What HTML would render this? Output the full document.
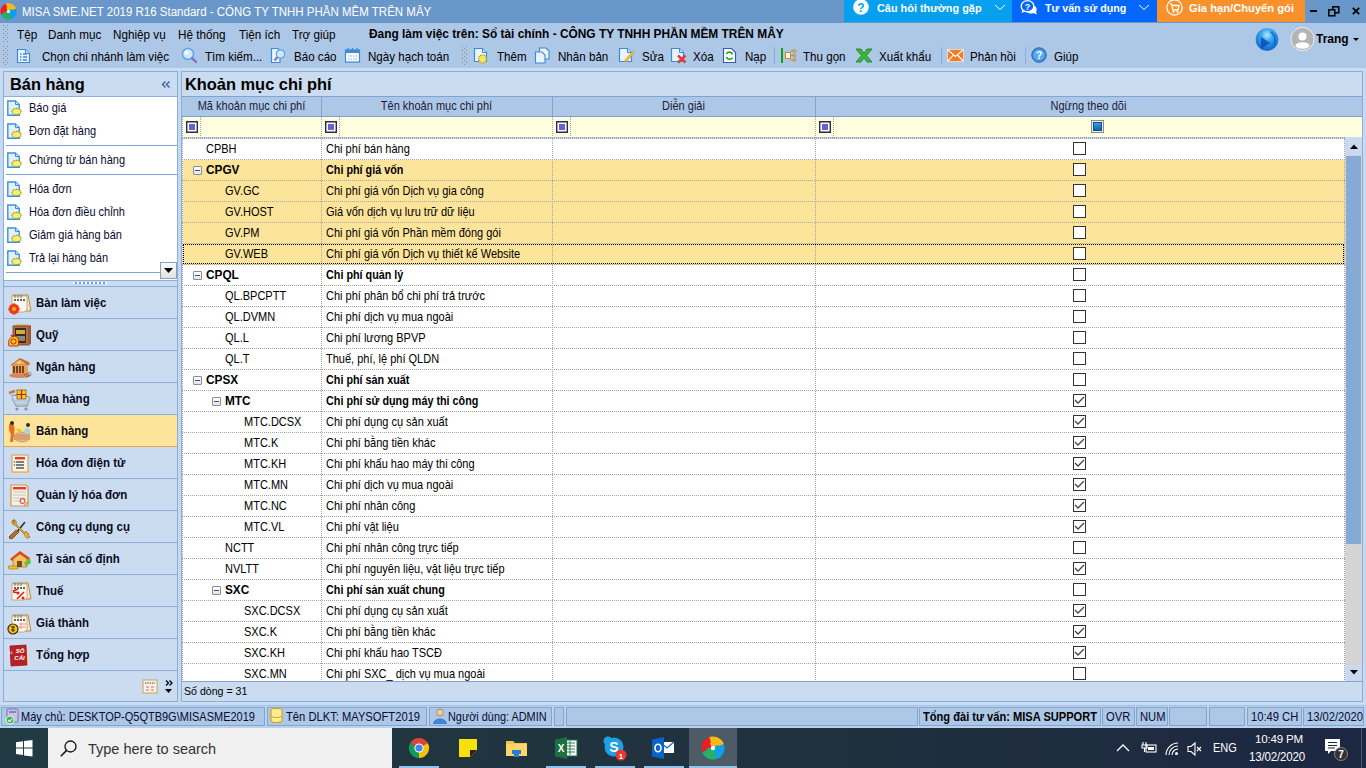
<!DOCTYPE html>
<html><head><meta charset="utf-8"><style>
*{box-sizing:border-box;margin:0;padding:0}
html,body{width:1366px;height:768px;overflow:hidden}
body{position:relative;background:#c6d9f0;font-family:"Liberation Sans",sans-serif;font-size:12px;color:#000}
.a{position:absolute}
.t{position:absolute;white-space:nowrap;line-height:1}
svg{position:absolute;overflow:visible}
</style></head><body>
<div class="a" style="left:0px;top:0px;width:1366px;height:23px;background:#6a97c9;"></div>
<svg style="left:0;top:3px" width="17" height="17" viewBox="0 0 24 24"><clipPath id="lc1"><circle cx="12" cy="12" r="11.5"/></clipPath><g clip-path="url(#lc1)"><g transform="rotate(-20 12 12)"><path d="M12 12 V0 H24 V12 Z" fill="#fdb913"/><path d="M12 12 H24 V24 H12 Z" fill="#0aa0ee"/><path d="M12 12 V24 H0 V12 Z" fill="#25b06a"/><path d="M12 12 H0 V0 H12 Z" fill="#ec1c24"/></g><circle cx="7.2" cy="9.5" r="5.2" fill="#ec1c24"/><circle cx="14.5" cy="7.2" r="5.2" fill="#fdb913"/><circle cx="16.8" cy="14.5" r="5.2" fill="#0aa0ee"/><circle cx="9.5" cy="16.8" r="5.2" fill="#25b06a"/></g><circle cx="12" cy="12" r="2.2" fill="#fff"/></svg>
<div class="t" style="left:22px;top:7px;font-size:11.5px;color:#fff;transform:scaleY(1.08);transform-origin:0 9.5px">MISA SME.NET 2019 R16 Standard - CÔNG TY TNHH PHẦN MỀM TRÊN MÂY</div>
<div class="a" style="left:844px;top:0px;width:168px;height:22px;background:#06a0ee;"></div>
<div class="a" style="left:1012px;top:0px;width:145px;height:22px;background:#0467fc;"></div>
<div class="a" style="left:1157px;top:0px;width:148px;height:22px;background:#f8912b;"></div>
<svg style="left:853px;top:-1px" width="16" height="16"><circle cx="8" cy="8" r="7.8" fill="#fff"/><text x="8" y="12.5" font-family="Liberation Sans" font-weight="bold" font-size="12" text-anchor="middle" fill="#06a0ee">?</text></svg>
<div class="t" style="left:877px;top:3px;font-size:10.9px;font-weight:bold;color:#fff;">Câu hỏi thường gặp</div>
<svg style="left:994px;top:4px" width="12" height="7"><path d="M1 1 L6 5.5 L11 1" stroke="#fff" stroke-width="1" fill="none"/></svg>
<svg style="left:1020px;top:0px" width="18" height="15"><path d="M11 5 C16 5 18 9 16 12 L17 14.5 L13.5 13 C11 14 8 13.5 7 12 Z" fill="#fff"/><ellipse cx="7.5" cy="6.3" rx="6.3" ry="5.6" fill="#0467fc" stroke="#fff" stroke-width="1.3"/><path d="M2.5 10 L1.5 13 L5 11.5" fill="#fff"/><text x="7.5" y="9.6" font-family="Liberation Sans" font-weight="bold" font-size="9" text-anchor="middle" fill="#fff">?</text></svg>
<div class="t" style="left:1045px;top:3px;font-size:10.7px;font-weight:bold;color:#fff;">Tư vấn sử dụng</div>
<svg style="left:1138px;top:4px" width="12" height="7"><path d="M1 1 L6 5.5 L11 1" stroke="#fff" stroke-width="1" fill="none"/></svg>
<svg style="left:1166px;top:-1px" width="17" height="17"><circle cx="8.5" cy="8.5" r="7.7" stroke="#fff" stroke-width="1.2" fill="none"/><path d="M4 5 L5.5 5 L7 11 L12 11 L13 6.5 L6 6.5" stroke="#fff" stroke-width="1.3" fill="none"/><circle cx="7.5" cy="13" r="1" fill="#fff"/><circle cx="11.5" cy="13" r="1" fill="#fff"/></svg>
<div class="t" style="left:1189px;top:3px;font-size:11.2px;font-weight:bold;color:#fff;">Gia hạn/Chuyển gói</div>
<div class="a" style="left:1310px;top:10px;width:7px;height:2px;background:#000;"></div>
<svg style="left:1327px;top:5px" width="14" height="12"><rect x="5.8" y="1.8" width="6" height="6" fill="none" stroke="#000" stroke-width="1.5"/><rect x="1.8" y="4.8" width="6" height="6" fill="#6a97c9" stroke="#000" stroke-width="1.5"/></svg>
<svg style="left:1352px;top:7px" width="8" height="8"><path d="M0.8 0.8 L7.2 7.2 M7.2 0.8 L0.8 7.2" stroke="#000" stroke-width="1.8"/></svg>
<div class="a" style="left:0px;top:23px;width:1366px;height:45px;background:#adc7e6;"></div>
<div class="a" style="left:0px;top:68px;width:1366px;height:3px;background:#c9dbf0;"></div>
<svg style="left:0;top:0" width="1366" height="70" fill="#8c8a88"><rect x="3" y="25" width="1" height="1"/><rect x="7" y="25" width="1" height="1"/><rect x="5" y="27" width="1" height="1"/><rect x="3" y="29" width="1" height="1"/><rect x="7" y="29" width="1" height="1"/><rect x="5" y="31" width="1" height="1"/><rect x="3" y="33" width="1" height="1"/><rect x="7" y="33" width="1" height="1"/><rect x="5" y="35" width="1" height="1"/><rect x="3" y="37" width="1" height="1"/><rect x="7" y="37" width="1" height="1"/><rect x="5" y="39" width="1" height="1"/><rect x="3" y="41" width="1" height="1"/><rect x="7" y="41" width="1" height="1"/></svg>
<svg style="left:0;top:0" width="1366" height="70" fill="#8c8a88"><rect x="3" y="46" width="1" height="1"/><rect x="7" y="46" width="1" height="1"/><rect x="5" y="48" width="1" height="1"/><rect x="3" y="50" width="1" height="1"/><rect x="7" y="50" width="1" height="1"/><rect x="5" y="52" width="1" height="1"/><rect x="3" y="54" width="1" height="1"/><rect x="7" y="54" width="1" height="1"/><rect x="5" y="56" width="1" height="1"/><rect x="3" y="58" width="1" height="1"/><rect x="7" y="58" width="1" height="1"/><rect x="5" y="60" width="1" height="1"/><rect x="3" y="62" width="1" height="1"/><rect x="7" y="62" width="1" height="1"/><rect x="5" y="64" width="1" height="1"/></svg>
<div class="t" style="left:17px;top:29px;font-size:11.7px;color:#000;transform:scaleY(1.06);transform-origin:0 10px">Tệp</div>
<div class="t" style="left:48px;top:29px;font-size:11.7px;color:#000;transform:scaleY(1.06);transform-origin:0 10px">Danh mục</div>
<div class="t" style="left:113px;top:29px;font-size:11.7px;color:#000;transform:scaleY(1.06);transform-origin:0 10px">Nghiệp vụ</div>
<div class="t" style="left:178px;top:29px;font-size:11.7px;color:#000;transform:scaleY(1.06);transform-origin:0 10px">Hệ thống</div>
<div class="t" style="left:239px;top:29px;font-size:11.7px;color:#000;transform:scaleY(1.06);transform-origin:0 10px">Tiện ích</div>
<div class="t" style="left:292px;top:29px;font-size:11.7px;color:#000;transform:scaleY(1.06);transform-origin:0 10px">Trợ giúp</div>
<div class="t" style="left:369px;top:29px;font-size:11.9px;font-weight:bold;color:#000;transform:scaleY(1.06);transform-origin:0 10px">Đang làm việc trên: Sổ tài chính - CÔNG TY TNHH PHẦN MỀM TRÊN MÂY</div>
<svg style="left:16px;top:48px" width="16" height="16"><path d="M1.5 1.5 H9.5 L13.5 5.5 V14.5 H1.5 Z" fill="#eaf3fc" stroke="#3d8ad8" stroke-width="1.2"/><path d="M9.5 1.5 V5.5 H13.5" fill="#c8def4" stroke="#3d8ad8" stroke-width="1"/><path d="M4 6 H5.5 M4 9 H5.5 M4 12 H5.5 M7 6 H11 M7 9 H11 M7 12 H11" stroke="#3d8ad8" stroke-width="1.3"/></svg>
<svg style="left:181px;top:47px" width="17" height="17"><circle cx="7" cy="7" r="5.5" fill="#cfe8fb" stroke="#5aa8e0" stroke-width="1.5"/><circle cx="5.5" cy="5.5" r="2" fill="#fff"/><path d="M11 11 L15 15" stroke="#8a6ad0" stroke-width="2.4" stroke-linecap="round"/></svg>
<svg style="left:270px;top:47px" width="17" height="17"><path d="M1.5 1.5 H8 L10 3.5 V15.5 H1.5 Z" fill="#eaf3fc" stroke="#3d8ad8" stroke-width="1.2"/><circle cx="10.5" cy="7" r="4.2" fill="#cfe8fb" stroke="#5aa8e0" stroke-width="1.2"/><path d="M7.5 10 L4.5 13.5" stroke="#8a6ad0" stroke-width="2"/></svg>
<svg style="left:344px;top:47px" width="17" height="17"><rect x="1.5" y="3" width="14" height="12" fill="#fff" stroke="#3d8ad8" stroke-width="1.2"/><rect x="1.5" y="3" width="14" height="3" fill="#3d8ad8"/><path d="M4 1 V4 M8.5 1 V4 M13 1 V4" stroke="#3d8ad8" stroke-width="1.2"/><path d="M4 9 H14 M4 12 H14" stroke="#7ab0e8" stroke-width="1.2" stroke-dasharray="1.5 1"/></svg>
<svg style="left:0;top:0" width="1366" height="70" fill="#8c8a88"><rect x="462" y="46" width="1" height="1"/><rect x="466" y="46" width="1" height="1"/><rect x="464" y="48" width="1" height="1"/><rect x="462" y="50" width="1" height="1"/><rect x="466" y="50" width="1" height="1"/><rect x="464" y="52" width="1" height="1"/><rect x="462" y="54" width="1" height="1"/><rect x="466" y="54" width="1" height="1"/><rect x="464" y="56" width="1" height="1"/><rect x="462" y="58" width="1" height="1"/><rect x="466" y="58" width="1" height="1"/><rect x="464" y="60" width="1" height="1"/><rect x="462" y="62" width="1" height="1"/><rect x="466" y="62" width="1" height="1"/><rect x="464" y="64" width="1" height="1"/></svg>
<svg style="left:473px;top:47px" width="18" height="17"><path d="M1.5 1.5 H9.5 L13.5 5.5 V14.5 H1.5 Z" fill="#eaf3fc" stroke="#3d8ad8" stroke-width="1.2"/><path d="M9.5 1.5 V5.5 H13.5" fill="#c8def4" stroke="#3d8ad8" stroke-width="1"/><circle cx="9.5" cy="12" r="4" fill="#f2e860" stroke="#a89a18" stroke-width="1.2" stroke-dasharray="1.2 0.8"/></svg>
<svg style="left:534px;top:47px" width="17" height="17"><path d="M5.5 1 H12 L15 4 V12 H5.5 Z" fill="#eaf3fc" stroke="#3d8ad8" stroke-width="1.1"/><path d="M1.5 5 H8 L11 8 V16 H1.5 Z" fill="#eaf3fc" stroke="#3d8ad8" stroke-width="1.1"/></svg>
<svg style="left:618px;top:47px" width="17" height="17"><path d="M1.5 1.5 H9.5 L13.5 5.5 V14.5 H1.5 Z" fill="#eaf3fc" stroke="#3d8ad8" stroke-width="1.2"/><path d="M9.5 1.5 V5.5 H13.5" fill="#c8def4" stroke="#3d8ad8" stroke-width="1"/><path d="M7 13 L14.5 4.5 L16 6 L8.5 14.5 L6.5 15 Z" fill="#f4c640" stroke="#c89a20" stroke-width="0.8"/></svg>
<svg style="left:670px;top:47px" width="18" height="17"><path d="M1.5 1.5 H9.5 L13.5 5.5 V14.5 H1.5 Z" fill="#eaf3fc" stroke="#3d8ad8" stroke-width="1.2"/><path d="M9.5 1.5 V5.5 H13.5" fill="#c8def4" stroke="#3d8ad8" stroke-width="1"/><path d="M8 8.5 L15.5 15.5 M15.5 8.5 L8 15.5" stroke="#e03a3a" stroke-width="2.4"/></svg>
<svg style="left:722px;top:47px" width="16" height="17"><path d="M1.5 1.5 H9.5 L13.5 5.5 V15.5 H1.5 Z" fill="#fff" stroke="#3d5ab8" stroke-width="1.2"/><path d="M4.5 7 A3.2 3.2 0 0 1 10.5 7.5 M10.5 10.5 A3.2 3.2 0 0 1 4.5 10" stroke="#28a028" stroke-width="1.8" fill="none"/></svg>
<div class="a" style="left:774px;top:47px;width:1px;height:17px;background:#8aacd8;"></div>
<svg style="left:780px;top:47px" width="17" height="17"><path d="M2 1 V16" stroke="#1a9a1a" stroke-width="2"/><rect x="5.5" y="5.5" width="5" height="6" fill="#fff4d8" stroke="#c88a30" stroke-width="1"/><path d="M10.5 4 H14 M10.5 8.5 H14 M10.5 13 H14" stroke="#c88a30" stroke-width="1"/><circle cx="14.5" cy="4" r="1.4" fill="none" stroke="#c88a30"/><circle cx="14.5" cy="8.5" r="1.4" fill="none" stroke="#c88a30"/><circle cx="14.5" cy="13" r="1.4" fill="none" stroke="#c88a30"/></svg>
<svg style="left:855px;top:48px" width="18" height="15"><path d="M1 1 H6 L9 5.5 L12 1 H17 L11.5 7.5 L17 14 H12 L9 9.5 L6 14 H1 L6.5 7.5 Z" fill="#3cb83c" stroke="#1a7a1a" stroke-width="0.8"/></svg>
<div class="a" style="left:941px;top:47px;width:1px;height:17px;background:#8aacd8;"></div>
<svg style="left:947px;top:49px" width="17" height="13"><rect x="0.5" y="0.5" width="16" height="12" fill="#f47a20" stroke="#fff" stroke-width="0.6"/><path d="M1 1 L8.5 7.5 L16 1 M1 12 L6.5 6 M16 12 L10.5 6" stroke="#fff" stroke-width="1.2" fill="none"/></svg>
<div class="a" style="left:1025px;top:47px;width:1px;height:17px;background:#8aacd8;"></div>
<svg style="left:1031px;top:47px" width="16" height="16"><circle cx="8" cy="8" r="7.3" fill="#3a88d8" stroke="#1a5aa8" stroke-width="0.8"/><circle cx="8" cy="8" r="5.8" fill="#5aa8f0"/><text x="8" y="12" font-family="Liberation Sans" font-weight="bold" font-size="11" text-anchor="middle" fill="#fff">?</text></svg>
<svg style="left:1255px;top:28px" width="24" height="24"><defs><radialGradient id="gg" cx="0.5" cy="0.3" r="0.75"><stop offset="0" stop-color="#b8e8ff"/><stop offset="0.35" stop-color="#38a8f0"/><stop offset="1" stop-color="#0a5ac0"/></radialGradient></defs><circle cx="12" cy="11.5" r="11.3" fill="url(#gg)"/><path d="M6 9 L15 15 L6 21 Z" fill="#0a4cb8" opacity="0.85"/><path d="M16 4 C20 7 21 12 19 17" stroke="#0a58c0" stroke-width="2" fill="none" opacity="0.7"/></svg>
<svg style="left:1290px;top:27px" width="25" height="25"><circle cx="12.5" cy="12" r="11.6" fill="#b4b4b4" stroke="#f0f0f0" stroke-width="1"/><circle cx="12.5" cy="9.6" r="4" fill="#fff"/><ellipse cx="12.5" cy="18.5" rx="7" ry="3.3" fill="#fff"/></svg>
<div class="t" style="left:1316px;top:33px;font-size:12px;font-weight:bold;color:#000;transform:scaleY(1.1);transform-origin:0 10px">Trang</div>
<svg style="left:1353px;top:38px" width="6" height="4"><path d="M0 0 H6 L3 3 Z" fill="#000"/></svg>
<div class="t" style="left:42px;top:51px;font-size:11.6px;color:#000;transform:scaleY(1.06);transform-origin:0 10px">Chọn chi nhánh làm việc</div>
<div class="t" style="left:205px;top:51px;font-size:11.6px;color:#000;transform:scaleY(1.06);transform-origin:0 10px">Tìm kiếm...</div>
<div class="t" style="left:294px;top:51px;font-size:11.6px;color:#000;transform:scaleY(1.06);transform-origin:0 10px">Báo cáo</div>
<div class="t" style="left:368px;top:51px;font-size:11.6px;color:#000;transform:scaleY(1.06);transform-origin:0 10px">Ngày hạch toán</div>
<div class="t" style="left:497px;top:51px;font-size:11.6px;color:#000;transform:scaleY(1.06);transform-origin:0 10px">Thêm</div>
<div class="t" style="left:558px;top:51px;font-size:11.6px;color:#000;transform:scaleY(1.06);transform-origin:0 10px">Nhân bản</div>
<div class="t" style="left:642px;top:51px;font-size:11.6px;color:#000;transform:scaleY(1.06);transform-origin:0 10px">Sửa</div>
<div class="t" style="left:693px;top:51px;font-size:11.6px;color:#000;transform:scaleY(1.06);transform-origin:0 10px">Xóa</div>
<div class="t" style="left:745px;top:51px;font-size:11.6px;color:#000;transform:scaleY(1.06);transform-origin:0 10px">Nạp</div>
<div class="t" style="left:803px;top:51px;font-size:11.6px;color:#000;transform:scaleY(1.06);transform-origin:0 10px">Thu gọn</div>
<div class="t" style="left:879px;top:51px;font-size:11.6px;color:#000;transform:scaleY(1.06);transform-origin:0 10px">Xuất khẩu</div>
<div class="t" style="left:970px;top:51px;font-size:11.6px;color:#000;transform:scaleY(1.06);transform-origin:0 10px">Phản hồi</div>
<div class="t" style="left:1054px;top:51px;font-size:11.6px;color:#000;transform:scaleY(1.06);transform-origin:0 10px">Giúp</div>
<div class="a" style="left:3px;top:71px;width:175px;height:631px;border:1px solid #8aafdb;background:#cbdcf0"></div>
<div class="t" style="left:10px;top:76px;font-size:16.4px;font-weight:bold;color:#000;">Bán hàng</div>
<svg style="left:160px;top:79px" width="12" height="11"><path d="M5.5 2.5 L2.5 5.5 L5.5 8.5 M9.5 2.5 L6.5 5.5 L9.5 8.5" stroke="#3d68a8" stroke-width="1.5" fill="none"/></svg>
<div class="a" style="left:4px;top:96px;width:173px;height:1px;background:#8aafdb;"></div>
<div class="a" style="left:4px;top:97px;width:173px;height:183px;background:#fff;"></div>
<svg style="left:7px;top:100px" width="18" height="17"><path d="M0.8 1 H8.5 L12.2 4.5 V15.2 H0.8 Z" fill="#e4f0fc" stroke="#3a90e0" stroke-width="1.4"/><path d="M8.5 1 V4.5 H12.2" fill="#c0dcf6" stroke="#3a90e0" stroke-width="1"/><polygon points="15.50,11.50 13.56,12.25 14.70,13.60 12.47,13.55 12.50,15.14 10.59,14.30 9.50,15.70 8.41,14.30 6.50,15.14 6.53,13.55 4.30,13.60 5.44,12.25 3.50,11.50 5.44,10.75 4.30,9.40 6.53,9.45 6.50,7.86 8.41,8.70 9.50,7.30 10.59,8.70 12.50,7.86 12.47,9.45 14.70,9.40 13.56,10.75 " fill="#a8a020"/><ellipse cx="9.5" cy="11.5" rx="4" ry="2.6" fill="#f4f070"/></svg>
<div class="t" style="left:29px;top:103px;font-size:11px;color:#0a0a30;transform:scaleY(1.1);transform-origin:0 9.3px">Báo giá</div>
<svg style="left:7px;top:123px" width="18" height="17"><path d="M0.8 1 H8.5 L12.2 4.5 V15.2 H0.8 Z" fill="#e4f0fc" stroke="#3a90e0" stroke-width="1.4"/><path d="M8.5 1 V4.5 H12.2" fill="#c0dcf6" stroke="#3a90e0" stroke-width="1"/><polygon points="15.50,11.50 13.56,12.25 14.70,13.60 12.47,13.55 12.50,15.14 10.59,14.30 9.50,15.70 8.41,14.30 6.50,15.14 6.53,13.55 4.30,13.60 5.44,12.25 3.50,11.50 5.44,10.75 4.30,9.40 6.53,9.45 6.50,7.86 8.41,8.70 9.50,7.30 10.59,8.70 12.50,7.86 12.47,9.45 14.70,9.40 13.56,10.75 " fill="#a8a020"/><ellipse cx="9.5" cy="11.5" rx="4" ry="2.6" fill="#f4f070"/></svg>
<div class="t" style="left:29px;top:126px;font-size:11px;color:#0a0a30;transform:scaleY(1.1);transform-origin:0 9.3px">Đơn đặt hàng</div>
<svg style="left:7px;top:152px" width="18" height="17"><path d="M0.8 1 H8.5 L12.2 4.5 V15.2 H0.8 Z" fill="#e4f0fc" stroke="#3a90e0" stroke-width="1.4"/><path d="M8.5 1 V4.5 H12.2" fill="#c0dcf6" stroke="#3a90e0" stroke-width="1"/><polygon points="15.50,11.50 13.56,12.25 14.70,13.60 12.47,13.55 12.50,15.14 10.59,14.30 9.50,15.70 8.41,14.30 6.50,15.14 6.53,13.55 4.30,13.60 5.44,12.25 3.50,11.50 5.44,10.75 4.30,9.40 6.53,9.45 6.50,7.86 8.41,8.70 9.50,7.30 10.59,8.70 12.50,7.86 12.47,9.45 14.70,9.40 13.56,10.75 " fill="#a8a020"/><ellipse cx="9.5" cy="11.5" rx="4" ry="2.6" fill="#f4f070"/></svg>
<div class="t" style="left:29px;top:155px;font-size:11px;color:#0a0a30;transform:scaleY(1.1);transform-origin:0 9.3px">Chứng từ bán hàng</div>
<svg style="left:7px;top:181px" width="18" height="17"><path d="M0.8 1 H8.5 L12.2 4.5 V15.2 H0.8 Z" fill="#e4f0fc" stroke="#3a90e0" stroke-width="1.4"/><path d="M8.5 1 V4.5 H12.2" fill="#c0dcf6" stroke="#3a90e0" stroke-width="1"/><polygon points="15.50,11.50 13.56,12.25 14.70,13.60 12.47,13.55 12.50,15.14 10.59,14.30 9.50,15.70 8.41,14.30 6.50,15.14 6.53,13.55 4.30,13.60 5.44,12.25 3.50,11.50 5.44,10.75 4.30,9.40 6.53,9.45 6.50,7.86 8.41,8.70 9.50,7.30 10.59,8.70 12.50,7.86 12.47,9.45 14.70,9.40 13.56,10.75 " fill="#a8a020"/><ellipse cx="9.5" cy="11.5" rx="4" ry="2.6" fill="#f4f070"/></svg>
<div class="t" style="left:29px;top:184px;font-size:11px;color:#0a0a30;transform:scaleY(1.1);transform-origin:0 9.3px">Hóa đơn</div>
<svg style="left:7px;top:204px" width="18" height="17"><path d="M0.8 1 H8.5 L12.2 4.5 V15.2 H0.8 Z" fill="#e4f0fc" stroke="#3a90e0" stroke-width="1.4"/><path d="M8.5 1 V4.5 H12.2" fill="#c0dcf6" stroke="#3a90e0" stroke-width="1"/><polygon points="15.50,11.50 13.56,12.25 14.70,13.60 12.47,13.55 12.50,15.14 10.59,14.30 9.50,15.70 8.41,14.30 6.50,15.14 6.53,13.55 4.30,13.60 5.44,12.25 3.50,11.50 5.44,10.75 4.30,9.40 6.53,9.45 6.50,7.86 8.41,8.70 9.50,7.30 10.59,8.70 12.50,7.86 12.47,9.45 14.70,9.40 13.56,10.75 " fill="#a8a020"/><ellipse cx="9.5" cy="11.5" rx="4" ry="2.6" fill="#f4f070"/></svg>
<div class="t" style="left:29px;top:207px;font-size:11px;color:#0a0a30;transform:scaleY(1.1);transform-origin:0 9.3px">Hóa đơn điều chỉnh</div>
<svg style="left:7px;top:227px" width="18" height="17"><path d="M0.8 1 H8.5 L12.2 4.5 V15.2 H0.8 Z" fill="#e4f0fc" stroke="#3a90e0" stroke-width="1.4"/><path d="M8.5 1 V4.5 H12.2" fill="#c0dcf6" stroke="#3a90e0" stroke-width="1"/><polygon points="15.50,11.50 13.56,12.25 14.70,13.60 12.47,13.55 12.50,15.14 10.59,14.30 9.50,15.70 8.41,14.30 6.50,15.14 6.53,13.55 4.30,13.60 5.44,12.25 3.50,11.50 5.44,10.75 4.30,9.40 6.53,9.45 6.50,7.86 8.41,8.70 9.50,7.30 10.59,8.70 12.50,7.86 12.47,9.45 14.70,9.40 13.56,10.75 " fill="#a8a020"/><ellipse cx="9.5" cy="11.5" rx="4" ry="2.6" fill="#f4f070"/></svg>
<div class="t" style="left:29px;top:230px;font-size:11px;color:#0a0a30;transform:scaleY(1.1);transform-origin:0 9.3px">Giảm giá hàng bán</div>
<svg style="left:7px;top:250px" width="18" height="17"><path d="M0.8 1 H8.5 L12.2 4.5 V15.2 H0.8 Z" fill="#e4f0fc" stroke="#3a90e0" stroke-width="1.4"/><path d="M8.5 1 V4.5 H12.2" fill="#c0dcf6" stroke="#3a90e0" stroke-width="1"/><polygon points="15.50,11.50 13.56,12.25 14.70,13.60 12.47,13.55 12.50,15.14 10.59,14.30 9.50,15.70 8.41,14.30 6.50,15.14 6.53,13.55 4.30,13.60 5.44,12.25 3.50,11.50 5.44,10.75 4.30,9.40 6.53,9.45 6.50,7.86 8.41,8.70 9.50,7.30 10.59,8.70 12.50,7.86 12.47,9.45 14.70,9.40 13.56,10.75 " fill="#a8a020"/><ellipse cx="9.5" cy="11.5" rx="4" ry="2.6" fill="#f4f070"/></svg>
<div class="t" style="left:29px;top:253px;font-size:11px;color:#0a0a30;transform:scaleY(1.1);transform-origin:0 9.3px">Trả lại hàng bán</div>
<div class="a" style="left:6px;top:145px;width:171px;height:1px;background:#7fa4d2;"></div>
<div class="a" style="left:6px;top:174px;width:171px;height:1px;background:#7fa4d2;"></div>
<div class="a" style="left:6px;top:272px;width:171px;height:1px;background:#7fa4d2;"></div>
<div class="a" style="left:160px;top:262px;width:17px;height:17px;border:1px solid #8a9fb8;background:linear-gradient(#fafafa,#e2e2e2)"></div>
<svg style="left:164px;top:268px" width="9" height="5"><path d="M0 0 L9 0 L4.5 5 Z" fill="#000"/></svg>
<div class="a" style="left:4px;top:280px;width:173px;height:1px;background:#8aafdb;"></div>
<div class="a" style="left:73px;top:282px;width:34px;height:2px;background-image:linear-gradient(to right,#fff 50%,#7a98c0 50%);background-size:4px 2px"></div>
<div class="a" style="left:4px;top:286px;width:173px;height:1px;background:#8aafdb;"></div>
<svg style="left:142px;top:679px" width="16" height="15"><rect x="1" y="1" width="14" height="13" fill="#fbf4e4" stroke="#c8a060" stroke-width="1"/><path d="M3 4 H13" stroke="#444" stroke-width="1" stroke-dasharray="1.5 0.8"/><path d="M4 8 H7 M9 8 H12 M4 11 H7 M9 11 H12" stroke="#e06080" stroke-width="1"/></svg>
<svg style="left:165px;top:680px" width="8" height="6"><path d="M1 0.5 L3.5 3 L1 5.5 M4.5 0.5 L7 3 L4.5 5.5" stroke="#000" stroke-width="1.3" fill="none"/></svg>
<svg style="left:165px;top:689px" width="7" height="4"><path d="M0 0 H7 L3.5 4 Z" fill="#000"/></svg>
<div class="a" style="left:4px;top:318px;width:173px;height:1px;background:#8aafdb;"></div>
<div class="t" style="left:36px;top:298px;font-size:11.5px;font-weight:bold;color:#0a0a20;transform:scaleY(1.07);transform-origin:0 10px">Bàn làm việc</div>
<svg style="left:7px;top:292px" width="26" height="24" viewBox="0 0 26 24"><path d="M6 3 H21 L24 19 H7 Z" fill="#f4e6c8" stroke="#b88a48" stroke-width="1"/><path d="M5 4 H20 V18 L17 20 H5 Z" fill="#fbf8f0" stroke="#c89a58" stroke-width="0.8"/><path d="M8 3 V6 M11 3 V6 M14 3 V6" stroke="#555" stroke-width="0.8"/><path d="M7 8 H18" stroke="#333" stroke-width="1.4" stroke-dasharray="2 1"/><g fill="#ee3a1a"><circle cx="7" cy="13.5" r="2.2"/><circle cx="7" cy="20.5" r="2.2"/><circle cx="3.5" cy="17" r="2.2"/><circle cx="10.5" cy="17" r="2.2"/><circle cx="4.5" cy="14.5" r="2"/><circle cx="9.5" cy="14.5" r="2"/><circle cx="4.5" cy="19.5" r="2"/><circle cx="9.5" cy="19.5" r="2"/></g><circle cx="7" cy="17" r="2" fill="#f8b020"/></svg>
<div class="a" style="left:4px;top:350px;width:173px;height:1px;background:#8aafdb;"></div>
<div class="t" style="left:36px;top:330px;font-size:11.5px;font-weight:bold;color:#0a0a20;transform:scaleY(1.07);transform-origin:0 10px">Quỹ</div>
<svg style="left:7px;top:324px" width="26" height="24" viewBox="0 0 26 24"><path d="M7 2 L9 0.5 H22 L20 2 Z" fill="#d89a70"/><rect x="6" y="2" width="16" height="19" fill="#b86a40" stroke="#7a4020" stroke-width="0.8"/><rect x="8" y="4" width="11" height="15" fill="#3a2a20"/><rect x="9" y="6" width="9" height="4" fill="#c8b040"/><rect x="9" y="12" width="9" height="5" fill="#8a8a70"/><path d="M21 2 L24 1 V20 L21 21 Z" fill="#9a5a38"/><path d="M2 22 C0 15 5 12 7 12 C10 12 13 15 11 22 Z" fill="#f4c420" stroke="#c82010" stroke-width="0.9"/><path d="M4 11 L6 12.5 L8 11" stroke="#c82010" stroke-width="1.2" fill="none"/><circle cx="6.5" cy="17.5" r="2.6" fill="none" stroke="#c82010" stroke-width="1"/></svg>
<div class="a" style="left:4px;top:382px;width:173px;height:1px;background:#8aafdb;"></div>
<div class="t" style="left:36px;top:362px;font-size:11.5px;font-weight:bold;color:#0a0a20;transform:scaleY(1.07);transform-origin:0 10px">Ngân hàng</div>
<svg style="left:7px;top:356px" width="26" height="24" viewBox="0 0 26 24"><path d="M4 9 L13 2 L22 6 L23 9 Z" fill="#c87038"/><path d="M4 9 L13 3 L21 9 Z" fill="#f0b060" stroke="#a86028" stroke-width="0.7"/><rect x="5" y="9" width="16" height="9" fill="#e8a060"/><path d="M7 10 V17 M10 10 V17 M13 10 V17 M16 10 V17" stroke="#5a2a10" stroke-width="1.6"/><ellipse cx="13" cy="19.5" rx="11" ry="2.5" fill="#d88858"/><path d="M17 19 L24 16 M19 21 L25 18" stroke="#555" stroke-width="1.2" stroke-dasharray="1 1"/><circle cx="12" cy="6.5" r="1.3" fill="#f8e060"/></svg>
<div class="a" style="left:4px;top:414px;width:173px;height:1px;background:#8aafdb;"></div>
<div class="t" style="left:36px;top:394px;font-size:11.5px;font-weight:bold;color:#0a0a20;transform:scaleY(1.07);transform-origin:0 10px">Mua hàng</div>
<svg style="left:7px;top:388px" width="26" height="24" viewBox="0 0 26 24"><path d="M2 5 L8 3" stroke="#c87850" stroke-width="2.5"/><path d="M4 8 C10 6 20 7 23 10 L20 18 H9 L5 10" fill="none" stroke="#9aa4b0" stroke-width="1.4"/><path d="M8 13 H21 M9 16 H20" stroke="#aab4c0" stroke-width="1.2"/><rect x="10" y="2" width="9" height="9" fill="#f8c820" stroke="#8a6010" stroke-width="0.8"/><path d="M14.5 2 V11 M10 6.5 H19" stroke="#b82020" stroke-width="1.2"/><circle cx="10" cy="21" r="1.6" fill="#8a949e"/><circle cx="19" cy="21" r="1.6" fill="#8a949e"/></svg>
<div class="a" style="left:4px;top:415px;width:173px;height:31px;background:#fde49b;"></div>
<div class="a" style="left:4px;top:446px;width:173px;height:1px;background:#f4a04a;"></div>
<div class="t" style="left:36px;top:426px;font-size:11.5px;font-weight:bold;color:#0a0a20;transform:scaleY(1.07);transform-origin:0 10px">Bán hàng</div>
<svg style="left:7px;top:420px" width="26" height="24" viewBox="0 0 26 24"><ellipse cx="15" cy="17" rx="8" ry="5" fill="#e8b880" stroke="#b08050" stroke-width="0.6"/><path d="M7 14 H23 V20 H7 Z" fill="#d8a070"/><path d="M3 3 C1 6 2 12 4 14 L3 22 H6 L7 14 C8 10 8 5 5 3 Z" fill="#e8701a"/><circle cx="5" cy="3" r="2" fill="#3a2a1a"/><path d="M19 8 C17 9 17 13 18 14 H23 C23 11 23 9 21 8 Z" fill="#a8d0e8"/><circle cx="21" cy="5" r="2" fill="#3a2a1a"/><path d="M9 8 L15 10 L12 14 Z" fill="#f0c020"/></svg>
<div class="a" style="left:4px;top:478px;width:173px;height:1px;background:#8aafdb;"></div>
<div class="t" style="left:36px;top:458px;font-size:11.5px;font-weight:bold;color:#0a0a20;transform:scaleY(1.07);transform-origin:0 10px">Hóa đơn điện tử</div>
<svg style="left:7px;top:452px" width="26" height="24" viewBox="0 0 26 24"><path d="M3 20 H23 L22 22 H4 Z" fill="#f4d8b0"/><rect x="5" y="3" width="16" height="17" fill="#fbf4e4" stroke="#c89a58" stroke-width="1"/><rect x="8" y="5" width="10" height="2.4" fill="#e83a2a"/><path d="M9 10 H17 M9 13 H17 M9 16 H17" stroke="#555" stroke-width="1.4"/><circle cx="7.5" cy="10" r="0.9" fill="#888"/><circle cx="7.5" cy="13" r="0.9" fill="#888"/></svg>
<div class="a" style="left:4px;top:510px;width:173px;height:1px;background:#8aafdb;"></div>
<div class="t" style="left:36px;top:490px;font-size:11.5px;font-weight:bold;color:#0a0a20;transform:scaleY(1.07);transform-origin:0 10px">Quản lý hóa đơn</div>
<svg style="left:7px;top:484px" width="26" height="24" viewBox="0 0 26 24"><path d="M4 1 H19 L21 3 V22 H4 Z" fill="#f8f2e4" stroke="#c89850" stroke-width="1.2"/><path d="M17 22 L21 18" stroke="#c89850" stroke-width="1.2"/><rect x="6" y="3" width="13" height="2.4" fill="#e83a2a"/><path d="M6 8 H19 M6 11 H19 M6 14 H19 M6 17 H14" stroke="#b8b8b8" stroke-width="0.8"/><circle cx="15.5" cy="17" r="2.4" fill="none" stroke="#e05050" stroke-width="1.1"/></svg>
<div class="a" style="left:4px;top:542px;width:173px;height:1px;background:#8aafdb;"></div>
<div class="t" style="left:36px;top:522px;font-size:11.5px;font-weight:bold;color:#0a0a20;transform:scaleY(1.07);transform-origin:0 10px">Công cụ dụng cụ</div>
<svg style="left:7px;top:516px" width="26" height="24" viewBox="0 0 26 24"><path d="M6 21 L18 6" stroke="#333" stroke-width="1.6"/><path d="M6 21 L3 23 L2 22 L4 18 Z" fill="#6a4020"/><path d="M2 21 L9 14 L12 16 L5 23 Z" fill="#b0702a" stroke="#5a3010" stroke-width="0.6"/><path d="M18 6 L21 3" stroke="#e0e0e0" stroke-width="1.5"/><path d="M6 4 C4 6 5 9 8 9 L18 19 C18 22 21 23 23 21 L21 19.5 L22 18 L20 17 C20 15 18 15 18 17 L9 8 C10 5 8 3 6 4 L8 6 L7 7.5 Z" fill="#f4b820" stroke="#8a5a10" stroke-width="0.7"/></svg>
<div class="a" style="left:4px;top:574px;width:173px;height:1px;background:#8aafdb;"></div>
<div class="t" style="left:36px;top:554px;font-size:11.5px;font-weight:bold;color:#0a0a20;transform:scaleY(1.07);transform-origin:0 10px">Tài sản cố định</div>
<svg style="left:7px;top:548px" width="26" height="24" viewBox="0 0 26 24"><path d="M3 11 L13 3 L23 10 L21 12 L13 6 L5 13 Z" fill="#e8401a"/><path d="M6 11 L13 6 L20 11 V19 H6 Z" fill="#f8c060" stroke="#a86020" stroke-width="0.6"/><rect x="10" y="13" width="5" height="6" fill="#7a4a20"/><path d="M17 15 L23 10 L24 15 L19 18 Z" fill="#60c040"/><path d="M1 18 H10 L11 21 H2 Z" fill="#f0c020" stroke="#a87010" stroke-width="0.6"/></svg>
<div class="a" style="left:4px;top:606px;width:173px;height:1px;background:#8aafdb;"></div>
<div class="t" style="left:36px;top:586px;font-size:11.5px;font-weight:bold;color:#0a0a20;transform:scaleY(1.07);transform-origin:0 10px">Thuế</div>
<svg style="left:7px;top:580px" width="26" height="24" viewBox="0 0 26 24"><path d="M6 3 H21 L24 19 H7 Z" fill="#f4e6c8" stroke="#b88a48" stroke-width="1"/><path d="M5 4 H20 V18 L17 20 H5 Z" fill="#fbf8f0" stroke="#c89a58" stroke-width="0.8"/><path d="M8 3 V6 M11 3 V6 M14 3 V6" stroke="#555" stroke-width="0.8"/><path d="M7 8 H18" stroke="#333" stroke-width="1.4" stroke-dasharray="2 1"/><path d="M6 11 L11 9 M6 12 L12 13" stroke="#e82020" stroke-width="1.6"/><circle cx="11" cy="13" r="1.5" fill="#e82020"/><circle cx="16" cy="18" r="1.5" fill="#e82020"/><path d="M17 12 L10 19" stroke="#e82020" stroke-width="1.6"/></svg>
<div class="a" style="left:4px;top:638px;width:173px;height:1px;background:#8aafdb;"></div>
<div class="t" style="left:36px;top:618px;font-size:11.5px;font-weight:bold;color:#0a0a20;transform:scaleY(1.07);transform-origin:0 10px">Giá thành</div>
<svg style="left:7px;top:612px" width="26" height="24" viewBox="0 0 26 24"><path d="M6 3 H21 L24 19 H7 Z" fill="#f4e6c8" stroke="#b88a48" stroke-width="1"/><path d="M5 4 H20 V18 L17 20 H5 Z" fill="#fbf8f0" stroke="#c89a58" stroke-width="0.8"/><path d="M8 3 V6 M11 3 V6 M14 3 V6" stroke="#555" stroke-width="0.8"/><path d="M7 8 H18" stroke="#333" stroke-width="1.4" stroke-dasharray="2 1"/><path d="M12 12 H19 M12 15 H19 M14 11 V17" stroke="#f08860" stroke-width="0.9"/><circle cx="6" cy="17" r="5" fill="#f4c420" stroke="#3a2a10" stroke-width="1.2"/><path d="M4 15 H8 M4 18 H8 M6 14 V20" stroke="#3a2a10" stroke-width="1"/></svg>
<div class="a" style="left:4px;top:670px;width:173px;height:1px;background:#8aafdb;"></div>
<div class="t" style="left:36px;top:650px;font-size:11.5px;font-weight:bold;color:#0a0a20;transform:scaleY(1.07);transform-origin:0 10px">Tổng hợp</div>
<svg style="left:7px;top:644px" width="26" height="24" viewBox="0 0 26 24"><path d="M5 2 L20 1 L22 20 L6 22 Z" fill="#f8e0b0"/><path d="M3 2 L19 1 L20 21 L4 22 Z" fill="#b82028" stroke="#8a1018" stroke-width="0.7"/><text x="13" y="9" font-family="Liberation Sans" font-weight="bold" font-style="italic" font-size="6" text-anchor="middle" fill="#fff">SỔ</text><text x="12.5" y="16" font-family="Liberation Sans" font-weight="bold" font-style="italic" font-size="6" text-anchor="middle" fill="#fff">CÁI</text><path d="M2 8 H6 M2 9.5 H6" stroke="#fff" stroke-width="0.8" stroke-dasharray="1 0.8"/></svg>
<div class="a" style="left:181px;top:71px;width:1182px;height:631px;border:1px solid #8aafdb;background:#cbdcf0"></div>
<div class="t" style="left:185px;top:76px;font-size:16.4px;font-weight:bold;color:#000;">Khoản mục chi phí</div>
<div class="a" style="left:182px;top:96px;width:1180px;height:21px;background:#adc8e6;border-top:1px solid #7fa4d2;border-bottom:1px solid #7fa4d2"></div>
<div class="t" style="left:182px;top:101px;width:139px;text-align:center;font-size:11px;color:#1b1b3a;transform:scaleY(1.1);transform-origin:0 9.5px">Mã khoản mục chi phí</div>
<div class="a" style="left:321px;top:96px;width:1px;height:21px;background:#7fa4d2;"></div>
<div class="t" style="left:321px;top:101px;width:231px;text-align:center;font-size:11px;color:#1b1b3a;transform:scaleY(1.1);transform-origin:0 9.5px">Tên khoản mục chi phí</div>
<div class="a" style="left:552px;top:96px;width:1px;height:21px;background:#7fa4d2;"></div>
<div class="t" style="left:552px;top:101px;width:263px;text-align:center;font-size:11px;color:#1b1b3a;transform:scaleY(1.1);transform-origin:0 9.5px">Diễn giải</div>
<div class="a" style="left:815px;top:96px;width:1px;height:21px;background:#7fa4d2;"></div>
<div class="t" style="left:815px;top:101px;width:547px;text-align:center;font-size:11px;color:#1b1b3a;transform:scaleY(1.1);transform-origin:0 9.5px">Ngừng theo dõi</div>
<div class="a" style="left:182px;top:117px;width:1180px;height:20px;background:#ffffe0;"></div>
<div class="a" style="left:186px;top:121px;width:12px;height:12px;border:1px solid #2a2a62;box-shadow:inset 0 0 0 0.4px #2a2a62;background:#ffffe0"></div>
<div class="a" style="left:189px;top:124px;width:6px;height:6px;background:#6462cf;"></div>
<div class="a" style="left:200px;top:117px;width:1px;height:21px;background:#888;background:repeating-linear-gradient(to bottom,#a4a4a4 0px,#a4a4a4 1px,transparent 1px,transparent 2px)"></div>
<div class="a" style="left:325px;top:121px;width:12px;height:12px;border:1px solid #2a2a62;box-shadow:inset 0 0 0 0.4px #2a2a62;background:#ffffe0"></div>
<div class="a" style="left:328px;top:124px;width:6px;height:6px;background:#6462cf;"></div>
<div class="a" style="left:339px;top:117px;width:1px;height:21px;background:#888;background:repeating-linear-gradient(to bottom,#a4a4a4 0px,#a4a4a4 1px,transparent 1px,transparent 2px)"></div>
<div class="a" style="left:556px;top:121px;width:12px;height:12px;border:1px solid #2a2a62;box-shadow:inset 0 0 0 0.4px #2a2a62;background:#ffffe0"></div>
<div class="a" style="left:559px;top:124px;width:6px;height:6px;background:#6462cf;"></div>
<div class="a" style="left:570px;top:117px;width:1px;height:21px;background:#888;background:repeating-linear-gradient(to bottom,#a4a4a4 0px,#a4a4a4 1px,transparent 1px,transparent 2px)"></div>
<div class="a" style="left:819px;top:121px;width:12px;height:12px;border:1px solid #2a2a62;box-shadow:inset 0 0 0 0.4px #2a2a62;background:#ffffe0"></div>
<div class="a" style="left:822px;top:124px;width:6px;height:6px;background:#6462cf;"></div>
<div class="a" style="left:833px;top:117px;width:1px;height:21px;background:#888;background:repeating-linear-gradient(to bottom,#a4a4a4 0px,#a4a4a4 1px,transparent 1px,transparent 2px)"></div>
<div class="a" style="left:1091px;top:120px;width:13px;height:13px;border:1px solid #8a8a8a;background:#e8eef5"></div>
<div class="a" style="left:1093px;top:122px;width:9px;height:9px;background:linear-gradient(#3aa0e0,#1560a8);border:1px solid #0e4d8c"></div>
<div class="a" style="left:182px;top:139px;width:1163px;height:542px;background:#fff;"></div>
<div class="a" style="left:183px;top:160px;width:1162px;height:105px;background:#fde49b;"></div>
<div class="a" style="left:321px;top:117px;width:1px;height:564px;background:#999;background:repeating-linear-gradient(to bottom,#a4a4a4 0px,#a4a4a4 1px,transparent 1px,transparent 2px)"></div>
<div class="a" style="left:552px;top:117px;width:1px;height:564px;background:#999;background:repeating-linear-gradient(to bottom,#a4a4a4 0px,#a4a4a4 1px,transparent 1px,transparent 2px)"></div>
<div class="a" style="left:815px;top:117px;width:1px;height:564px;background:#999;background:repeating-linear-gradient(to bottom,#a4a4a4 0px,#a4a4a4 1px,transparent 1px,transparent 2px)"></div>
<div class="a" style="left:182px;top:117px;width:1px;height:564px;background:#999;background:repeating-linear-gradient(to bottom,#a4a4a4 0px,#a4a4a4 1px,transparent 1px,transparent 2px)"></div>
<div class="a" style="left:1344px;top:139px;width:1px;height:542px;background:#999;background:repeating-linear-gradient(to bottom,#a4a4a4 0px,#a4a4a4 1px,transparent 1px,transparent 2px)"></div>
<div class="a" style="left:182px;top:137px;width:1163px;height:2px;background:#888;background:repeating-linear-gradient(to right,#a4a4a4 0px,#a4a4a4 1px,transparent 1px,transparent 2px)"></div>
<div class="t" style="left:206px;top:144px;font-size:11px;color:#000;transform:scaleY(1.13);transform-origin:0 9.5px">CPBH</div>
<div class="t" style="left:326px;top:144px;font-size:11px;color:#000;transform:scaleY(1.13);transform-origin:0 9.5px">Chi phí bán hàng</div>
<div class="a" style="left:1073px;top:142px;width:13px;height:13px;border:1px solid #333;background:#fff"></div>
<div class="a" style="left:182px;top:159px;width:1163px;height:1px;background:#888;background:repeating-linear-gradient(to right,#a4a4a4 0px,#a4a4a4 1px,transparent 1px,transparent 2px)"></div>
<div class="a" style="left:193px;top:166px;width:9px;height:9px;border:1px solid #8c8c8c;border-radius:1px;background:linear-gradient(#fff,#e4e4e4)"></div>
<div class="a" style="left:195px;top:170px;width:5px;height:1px;background:#3a4c8c;"></div>
<div class="t" style="left:206px;top:165px;font-size:11.8px;font-weight:bold;color:#000;transform:scaleY(1.13);transform-origin:0 9.5px">CPGV</div>
<div class="t" style="left:326px;top:165px;font-size:10.8px;font-weight:bold;color:#000;transform:scaleY(1.13);transform-origin:0 9.5px">Chi phí giá vốn</div>
<div class="a" style="left:1073px;top:163px;width:13px;height:13px;border:1px solid #333;background:#fff"></div>
<div class="a" style="left:182px;top:180px;width:1163px;height:1px;background:#888;background:repeating-linear-gradient(to right,#a4a4a4 0px,#a4a4a4 1px,transparent 1px,transparent 2px)"></div>
<div class="t" style="left:225px;top:186px;font-size:11px;color:#000;transform:scaleY(1.13);transform-origin:0 9.5px">GV.GC</div>
<div class="t" style="left:326px;top:186px;font-size:11px;color:#000;transform:scaleY(1.13);transform-origin:0 9.5px">Chi phí giá vốn Dịch vụ gia công</div>
<div class="a" style="left:1073px;top:184px;width:13px;height:13px;border:1px solid #333;background:#fff"></div>
<div class="a" style="left:182px;top:201px;width:1163px;height:1px;background:#888;background:repeating-linear-gradient(to right,#a4a4a4 0px,#a4a4a4 1px,transparent 1px,transparent 2px)"></div>
<div class="t" style="left:225px;top:207px;font-size:11px;color:#000;transform:scaleY(1.13);transform-origin:0 9.5px">GV.HOST</div>
<div class="t" style="left:326px;top:207px;font-size:11px;color:#000;transform:scaleY(1.13);transform-origin:0 9.5px">Giá vốn dịch vụ lưu trữ dữ liệu</div>
<div class="a" style="left:1073px;top:205px;width:13px;height:13px;border:1px solid #333;background:#fff"></div>
<div class="a" style="left:182px;top:222px;width:1163px;height:1px;background:#888;background:repeating-linear-gradient(to right,#a4a4a4 0px,#a4a4a4 1px,transparent 1px,transparent 2px)"></div>
<div class="t" style="left:225px;top:228px;font-size:11px;color:#000;transform:scaleY(1.13);transform-origin:0 9.5px">GV.PM</div>
<div class="t" style="left:326px;top:228px;font-size:11px;color:#000;transform:scaleY(1.13);transform-origin:0 9.5px">Chi phí giá vốn Phần mềm đóng gói</div>
<div class="a" style="left:1073px;top:226px;width:13px;height:13px;border:1px solid #333;background:#fff"></div>
<div class="a" style="left:182px;top:243px;width:1163px;height:1px;background:#888;background:repeating-linear-gradient(to right,#a4a4a4 0px,#a4a4a4 1px,transparent 1px,transparent 2px)"></div>
<div class="t" style="left:225px;top:249px;font-size:11px;color:#000;transform:scaleY(1.13);transform-origin:0 9.5px">GV.WEB</div>
<div class="t" style="left:326px;top:249px;font-size:11px;color:#000;transform:scaleY(1.13);transform-origin:0 9.5px">Chi phí giá vốn Dịch vụ thiết kế Website</div>
<div class="a" style="left:1073px;top:247px;width:13px;height:13px;border:1px solid #333;background:#fff"></div>
<div class="a" style="left:182px;top:264px;width:1163px;height:1px;background:#888;background:repeating-linear-gradient(to right,#a4a4a4 0px,#a4a4a4 1px,transparent 1px,transparent 2px)"></div>
<div class="a" style="left:193px;top:271px;width:9px;height:9px;border:1px solid #8c8c8c;border-radius:1px;background:linear-gradient(#fff,#e4e4e4)"></div>
<div class="a" style="left:195px;top:275px;width:5px;height:1px;background:#3a4c8c;"></div>
<div class="t" style="left:206px;top:270px;font-size:11.8px;font-weight:bold;color:#000;transform:scaleY(1.13);transform-origin:0 9.5px">CPQL</div>
<div class="t" style="left:326px;top:270px;font-size:10.8px;font-weight:bold;color:#000;transform:scaleY(1.13);transform-origin:0 9.5px">Chi phí quản lý</div>
<div class="a" style="left:1073px;top:268px;width:13px;height:13px;border:1px solid #333;background:#fff"></div>
<div class="a" style="left:182px;top:285px;width:1163px;height:1px;background:#888;background:repeating-linear-gradient(to right,#a4a4a4 0px,#a4a4a4 1px,transparent 1px,transparent 2px)"></div>
<div class="t" style="left:225px;top:291px;font-size:11px;color:#000;transform:scaleY(1.13);transform-origin:0 9.5px">QL.BPCPTT</div>
<div class="t" style="left:326px;top:291px;font-size:11px;color:#000;transform:scaleY(1.13);transform-origin:0 9.5px">Chi phí phân bổ chi phí trả trước</div>
<div class="a" style="left:1073px;top:289px;width:13px;height:13px;border:1px solid #333;background:#fff"></div>
<div class="a" style="left:182px;top:306px;width:1163px;height:1px;background:#888;background:repeating-linear-gradient(to right,#a4a4a4 0px,#a4a4a4 1px,transparent 1px,transparent 2px)"></div>
<div class="t" style="left:225px;top:312px;font-size:11px;color:#000;transform:scaleY(1.13);transform-origin:0 9.5px">QL.DVMN</div>
<div class="t" style="left:326px;top:312px;font-size:11px;color:#000;transform:scaleY(1.13);transform-origin:0 9.5px">Chi phí dịch vụ mua ngoài</div>
<div class="a" style="left:1073px;top:310px;width:13px;height:13px;border:1px solid #333;background:#fff"></div>
<div class="a" style="left:182px;top:327px;width:1163px;height:1px;background:#888;background:repeating-linear-gradient(to right,#a4a4a4 0px,#a4a4a4 1px,transparent 1px,transparent 2px)"></div>
<div class="t" style="left:225px;top:333px;font-size:11px;color:#000;transform:scaleY(1.13);transform-origin:0 9.5px">QL.L</div>
<div class="t" style="left:326px;top:333px;font-size:11px;color:#000;transform:scaleY(1.13);transform-origin:0 9.5px">Chi phí lương BPVP</div>
<div class="a" style="left:1073px;top:331px;width:13px;height:13px;border:1px solid #333;background:#fff"></div>
<div class="a" style="left:182px;top:348px;width:1163px;height:1px;background:#888;background:repeating-linear-gradient(to right,#a4a4a4 0px,#a4a4a4 1px,transparent 1px,transparent 2px)"></div>
<div class="t" style="left:225px;top:354px;font-size:11px;color:#000;transform:scaleY(1.13);transform-origin:0 9.5px">QL.T</div>
<div class="t" style="left:326px;top:354px;font-size:11px;color:#000;transform:scaleY(1.13);transform-origin:0 9.5px">Thuế, phí, lệ phí QLDN</div>
<div class="a" style="left:1073px;top:352px;width:13px;height:13px;border:1px solid #333;background:#fff"></div>
<div class="a" style="left:182px;top:369px;width:1163px;height:1px;background:#888;background:repeating-linear-gradient(to right,#a4a4a4 0px,#a4a4a4 1px,transparent 1px,transparent 2px)"></div>
<div class="a" style="left:193px;top:376px;width:9px;height:9px;border:1px solid #8c8c8c;border-radius:1px;background:linear-gradient(#fff,#e4e4e4)"></div>
<div class="a" style="left:195px;top:380px;width:5px;height:1px;background:#3a4c8c;"></div>
<div class="t" style="left:206px;top:375px;font-size:11.8px;font-weight:bold;color:#000;transform:scaleY(1.13);transform-origin:0 9.5px">CPSX</div>
<div class="t" style="left:326px;top:375px;font-size:10.8px;font-weight:bold;color:#000;transform:scaleY(1.13);transform-origin:0 9.5px">Chi phí sản xuất</div>
<div class="a" style="left:1073px;top:373px;width:13px;height:13px;border:1px solid #333;background:#fff"></div>
<div class="a" style="left:182px;top:390px;width:1163px;height:1px;background:#888;background:repeating-linear-gradient(to right,#a4a4a4 0px,#a4a4a4 1px,transparent 1px,transparent 2px)"></div>
<div class="a" style="left:212px;top:397px;width:9px;height:9px;border:1px solid #8c8c8c;border-radius:1px;background:linear-gradient(#fff,#e4e4e4)"></div>
<div class="a" style="left:214px;top:401px;width:5px;height:1px;background:#3a4c8c;"></div>
<div class="t" style="left:225px;top:396px;font-size:11.8px;font-weight:bold;color:#000;transform:scaleY(1.13);transform-origin:0 9.5px">MTC</div>
<div class="t" style="left:326px;top:396px;font-size:10.8px;font-weight:bold;color:#000;transform:scaleY(1.13);transform-origin:0 9.5px">Chi phí sử dụng máy thi công</div>
<div class="a" style="left:1073px;top:394px;width:13px;height:13px;border:1px solid #333;background:#fff"></div>
<svg style="left:1073px;top:394px" width="13" height="13"><path d="M2 6 L5 9 L11 3" stroke="#444" stroke-width="1.3" fill="none"/></svg>
<div class="a" style="left:182px;top:411px;width:1163px;height:1px;background:#888;background:repeating-linear-gradient(to right,#a4a4a4 0px,#a4a4a4 1px,transparent 1px,transparent 2px)"></div>
<div class="t" style="left:244px;top:417px;font-size:11px;color:#000;transform:scaleY(1.13);transform-origin:0 9.5px">MTC.DCSX</div>
<div class="t" style="left:326px;top:417px;font-size:11px;color:#000;transform:scaleY(1.13);transform-origin:0 9.5px">Chi phí dụng cụ sản xuất</div>
<div class="a" style="left:1073px;top:415px;width:13px;height:13px;border:1px solid #333;background:#fff"></div>
<svg style="left:1073px;top:415px" width="13" height="13"><path d="M2 6 L5 9 L11 3" stroke="#444" stroke-width="1.3" fill="none"/></svg>
<div class="a" style="left:182px;top:432px;width:1163px;height:1px;background:#888;background:repeating-linear-gradient(to right,#a4a4a4 0px,#a4a4a4 1px,transparent 1px,transparent 2px)"></div>
<div class="t" style="left:244px;top:438px;font-size:11px;color:#000;transform:scaleY(1.13);transform-origin:0 9.5px">MTC.K</div>
<div class="t" style="left:326px;top:438px;font-size:11px;color:#000;transform:scaleY(1.13);transform-origin:0 9.5px">Chi phí bằng tiền khác</div>
<div class="a" style="left:1073px;top:436px;width:13px;height:13px;border:1px solid #333;background:#fff"></div>
<svg style="left:1073px;top:436px" width="13" height="13"><path d="M2 6 L5 9 L11 3" stroke="#444" stroke-width="1.3" fill="none"/></svg>
<div class="a" style="left:182px;top:453px;width:1163px;height:1px;background:#888;background:repeating-linear-gradient(to right,#a4a4a4 0px,#a4a4a4 1px,transparent 1px,transparent 2px)"></div>
<div class="t" style="left:244px;top:459px;font-size:11px;color:#000;transform:scaleY(1.13);transform-origin:0 9.5px">MTC.KH</div>
<div class="t" style="left:326px;top:459px;font-size:11px;color:#000;transform:scaleY(1.13);transform-origin:0 9.5px">Chi phí khấu hao máy thi công</div>
<div class="a" style="left:1073px;top:457px;width:13px;height:13px;border:1px solid #333;background:#fff"></div>
<svg style="left:1073px;top:457px" width="13" height="13"><path d="M2 6 L5 9 L11 3" stroke="#444" stroke-width="1.3" fill="none"/></svg>
<div class="a" style="left:182px;top:474px;width:1163px;height:1px;background:#888;background:repeating-linear-gradient(to right,#a4a4a4 0px,#a4a4a4 1px,transparent 1px,transparent 2px)"></div>
<div class="t" style="left:244px;top:480px;font-size:11px;color:#000;transform:scaleY(1.13);transform-origin:0 9.5px">MTC.MN</div>
<div class="t" style="left:326px;top:480px;font-size:11px;color:#000;transform:scaleY(1.13);transform-origin:0 9.5px">Chi phí dịch vụ mua ngoài</div>
<div class="a" style="left:1073px;top:478px;width:13px;height:13px;border:1px solid #333;background:#fff"></div>
<svg style="left:1073px;top:478px" width="13" height="13"><path d="M2 6 L5 9 L11 3" stroke="#444" stroke-width="1.3" fill="none"/></svg>
<div class="a" style="left:182px;top:495px;width:1163px;height:1px;background:#888;background:repeating-linear-gradient(to right,#a4a4a4 0px,#a4a4a4 1px,transparent 1px,transparent 2px)"></div>
<div class="t" style="left:244px;top:501px;font-size:11px;color:#000;transform:scaleY(1.13);transform-origin:0 9.5px">MTC.NC</div>
<div class="t" style="left:326px;top:501px;font-size:11px;color:#000;transform:scaleY(1.13);transform-origin:0 9.5px">Chi phí nhân công</div>
<div class="a" style="left:1073px;top:499px;width:13px;height:13px;border:1px solid #333;background:#fff"></div>
<svg style="left:1073px;top:499px" width="13" height="13"><path d="M2 6 L5 9 L11 3" stroke="#444" stroke-width="1.3" fill="none"/></svg>
<div class="a" style="left:182px;top:516px;width:1163px;height:1px;background:#888;background:repeating-linear-gradient(to right,#a4a4a4 0px,#a4a4a4 1px,transparent 1px,transparent 2px)"></div>
<div class="t" style="left:244px;top:522px;font-size:11px;color:#000;transform:scaleY(1.13);transform-origin:0 9.5px">MTC.VL</div>
<div class="t" style="left:326px;top:522px;font-size:11px;color:#000;transform:scaleY(1.13);transform-origin:0 9.5px">Chi phí vật liệu</div>
<div class="a" style="left:1073px;top:520px;width:13px;height:13px;border:1px solid #333;background:#fff"></div>
<svg style="left:1073px;top:520px" width="13" height="13"><path d="M2 6 L5 9 L11 3" stroke="#444" stroke-width="1.3" fill="none"/></svg>
<div class="a" style="left:182px;top:537px;width:1163px;height:1px;background:#888;background:repeating-linear-gradient(to right,#a4a4a4 0px,#a4a4a4 1px,transparent 1px,transparent 2px)"></div>
<div class="t" style="left:225px;top:543px;font-size:11px;color:#000;transform:scaleY(1.13);transform-origin:0 9.5px">NCTT</div>
<div class="t" style="left:326px;top:543px;font-size:11px;color:#000;transform:scaleY(1.13);transform-origin:0 9.5px">Chi phí nhân công trực tiếp</div>
<div class="a" style="left:1073px;top:541px;width:13px;height:13px;border:1px solid #333;background:#fff"></div>
<div class="a" style="left:182px;top:558px;width:1163px;height:1px;background:#888;background:repeating-linear-gradient(to right,#a4a4a4 0px,#a4a4a4 1px,transparent 1px,transparent 2px)"></div>
<div class="t" style="left:225px;top:564px;font-size:11px;color:#000;transform:scaleY(1.13);transform-origin:0 9.5px">NVLTT</div>
<div class="t" style="left:326px;top:564px;font-size:11px;color:#000;transform:scaleY(1.13);transform-origin:0 9.5px">Chi phí nguyên liệu, vật liệu trực tiếp</div>
<div class="a" style="left:1073px;top:562px;width:13px;height:13px;border:1px solid #333;background:#fff"></div>
<svg style="left:1073px;top:562px" width="13" height="13"><path d="M2 6 L5 9 L11 3" stroke="#444" stroke-width="1.3" fill="none"/></svg>
<div class="a" style="left:182px;top:579px;width:1163px;height:1px;background:#888;background:repeating-linear-gradient(to right,#a4a4a4 0px,#a4a4a4 1px,transparent 1px,transparent 2px)"></div>
<div class="a" style="left:212px;top:586px;width:9px;height:9px;border:1px solid #8c8c8c;border-radius:1px;background:linear-gradient(#fff,#e4e4e4)"></div>
<div class="a" style="left:214px;top:590px;width:5px;height:1px;background:#3a4c8c;"></div>
<div class="t" style="left:225px;top:585px;font-size:11.8px;font-weight:bold;color:#000;transform:scaleY(1.13);transform-origin:0 9.5px">SXC</div>
<div class="t" style="left:326px;top:585px;font-size:10.8px;font-weight:bold;color:#000;transform:scaleY(1.13);transform-origin:0 9.5px">Chi phí sản xuất chung</div>
<div class="a" style="left:1073px;top:583px;width:13px;height:13px;border:1px solid #333;background:#fff"></div>
<div class="a" style="left:182px;top:600px;width:1163px;height:1px;background:#888;background:repeating-linear-gradient(to right,#a4a4a4 0px,#a4a4a4 1px,transparent 1px,transparent 2px)"></div>
<div class="t" style="left:244px;top:606px;font-size:11px;color:#000;transform:scaleY(1.13);transform-origin:0 9.5px">SXC.DCSX</div>
<div class="t" style="left:326px;top:606px;font-size:11px;color:#000;transform:scaleY(1.13);transform-origin:0 9.5px">Chi phí dụng cụ sản xuất</div>
<div class="a" style="left:1073px;top:604px;width:13px;height:13px;border:1px solid #333;background:#fff"></div>
<svg style="left:1073px;top:604px" width="13" height="13"><path d="M2 6 L5 9 L11 3" stroke="#444" stroke-width="1.3" fill="none"/></svg>
<div class="a" style="left:182px;top:621px;width:1163px;height:1px;background:#888;background:repeating-linear-gradient(to right,#a4a4a4 0px,#a4a4a4 1px,transparent 1px,transparent 2px)"></div>
<div class="t" style="left:244px;top:627px;font-size:11px;color:#000;transform:scaleY(1.13);transform-origin:0 9.5px">SXC.K</div>
<div class="t" style="left:326px;top:627px;font-size:11px;color:#000;transform:scaleY(1.13);transform-origin:0 9.5px">Chi phí bằng tiền khác</div>
<div class="a" style="left:1073px;top:625px;width:13px;height:13px;border:1px solid #333;background:#fff"></div>
<svg style="left:1073px;top:625px" width="13" height="13"><path d="M2 6 L5 9 L11 3" stroke="#444" stroke-width="1.3" fill="none"/></svg>
<div class="a" style="left:182px;top:642px;width:1163px;height:1px;background:#888;background:repeating-linear-gradient(to right,#a4a4a4 0px,#a4a4a4 1px,transparent 1px,transparent 2px)"></div>
<div class="t" style="left:244px;top:648px;font-size:11px;color:#000;transform:scaleY(1.13);transform-origin:0 9.5px">SXC.KH</div>
<div class="t" style="left:326px;top:648px;font-size:11px;color:#000;transform:scaleY(1.13);transform-origin:0 9.5px">Chi phí khấu hao TSCĐ</div>
<div class="a" style="left:1073px;top:646px;width:13px;height:13px;border:1px solid #333;background:#fff"></div>
<svg style="left:1073px;top:646px" width="13" height="13"><path d="M2 6 L5 9 L11 3" stroke="#444" stroke-width="1.3" fill="none"/></svg>
<div class="a" style="left:182px;top:663px;width:1163px;height:1px;background:#888;background:repeating-linear-gradient(to right,#a4a4a4 0px,#a4a4a4 1px,transparent 1px,transparent 2px)"></div>
<div class="t" style="left:244px;top:669px;font-size:11px;color:#000;transform:scaleY(1.13);transform-origin:0 9.5px">SXC.MN</div>
<div class="t" style="left:326px;top:669px;font-size:11px;color:#000;transform:scaleY(1.13);transform-origin:0 9.5px">Chi phí SXC_ dịch vụ mua ngoài</div>
<div class="a" style="left:1073px;top:667px;width:13px;height:13px;border:1px solid #333;background:#fff"></div>
<div class="a" style="left:182px;top:684px;width:1163px;height:1px;background:#888;background:repeating-linear-gradient(to right,#a4a4a4 0px,#a4a4a4 1px,transparent 1px,transparent 2px)"></div>
<div class="a" style="left:183px;top:244px;width:1161px;height:20px;border:1px dotted #000"></div>
<div class="a" style="left:1345px;top:139px;width:17px;height:542px;background:#d4d4d4;"></div>
<div class="a" style="left:1345px;top:139px;width:17px;height:16px;background:#c9daf0;"></div>
<svg style="left:1350px;top:144px" width="8" height="5"><path d="M0 5 L4 0.5 L8 5 Z" fill="#000"/></svg>
<div class="a" style="left:1346px;top:156px;width:15px;height:388px;background:#86aad6;"></div>
<div class="a" style="left:1345px;top:665px;width:17px;height:16px;background:#c9daf0;"></div>
<svg style="left:1350px;top:670px" width="8" height="5"><path d="M0 0 L4 4.5 L8 0 Z" fill="#000"/></svg>
<div class="a" style="left:182px;top:681px;width:1180px;height:20px;background:#cbdcf0;"></div>
<div class="a" style="left:182px;top:681px;width:1180px;height:1px;background:#7fa4d2;"></div>
<div class="t" style="left:184px;top:686px;font-size:10.6px;color:#000;transform:scaleY(1.1);transform-origin:0 9px">Số dòng = 31</div>
<div class="a" style="left:0px;top:702px;width:1366px;height:26px;background:#cadcf0;"></div>
<div class="a" style="left:0px;top:705px;width:1366px;height:23px;background:#bcd2ec;"></div>
<div class="a" style="left:0px;top:705px;width:1366px;height:1px;background:#a8c2e4;"></div>
<div class="a" style="left:1px;top:707px;width:264px;height:19px;border:1px solid #7fa5d3;background:#adc7e6;"></div>
<div class="a" style="left:267px;top:707px;width:160px;height:19px;border:1px solid #7fa5d3;background:#adc7e6;"></div>
<div class="a" style="left:429px;top:707px;width:123px;height:19px;border:1px solid #7fa5d3;background:#adc7e6;"></div>
<div class="a" style="left:554px;top:707px;width:10px;height:19px;border:1px solid #7fa5d3;background:#adc7e6;"></div>
<div class="a" style="left:566px;top:707px;width:352px;height:19px;border:1px solid #7fa5d3;background:#adc7e6;"></div>
<div class="a" style="left:919px;top:707px;width:182px;height:19px;border:1px solid #7fa5d3;background:#adc7e6;"></div>
<div class="a" style="left:1102px;top:707px;width:33px;height:19px;border:1px solid #7fa5d3;background:#adc7e6;"></div>
<div class="a" style="left:1136px;top:707px;width:32px;height:19px;border:1px solid #7fa5d3;background:#adc7e6;"></div>
<div class="a" style="left:1169px;top:707px;width:38px;height:19px;border:1px solid #7fa5d3;background:#adc7e6;"></div>
<div class="a" style="left:1209px;top:707px;width:36px;height:19px;border:1px solid #7fa5d3;background:#adc7e6;"></div>
<div class="a" style="left:1247px;top:707px;width:55px;height:19px;border:1px solid #7fa5d3;background:#adc7e6;"></div>
<div class="a" style="left:1303px;top:707px;width:61px;height:19px;border:1px solid #7fa5d3;background:#adc7e6;"></div>
<svg style="left:5px;top:708px" width="14" height="17"><rect x="2" y="1" width="11" height="13" rx="1" fill="#c8c0e8" stroke="#7a70b0"/><rect x="4" y="3" width="7" height="2" fill="#8a80c0"/><circle cx="5" cy="12" r="4" fill="#3cb44a" stroke="#fff" stroke-width="0.8"/><path d="M3 12 L4.6 13.6 L7.2 10.6" stroke="#fff" stroke-width="1.1" fill="none"/></svg>
<div class="t" style="left:21px;top:712px;font-size:11px;color:#0a0a30;transform:scaleY(1.12);transform-origin:0 9.3px">Máy chủ: DESKTOP-Q5QTB9G\MISASME2019</div>
<svg style="left:270px;top:708px" width="13" height="15"><path d="M1 2.5 A5.5 2 0 0 1 12 2.5 V12.5 A5.5 2 0 0 1 1 12.5 Z" fill="#fbef90" stroke="#d8a010" stroke-width="1.1"/><path d="M1 7.5 A5.5 2 0 0 0 12 7.5" fill="none" stroke="#d8a010" stroke-width="1"/></svg>
<div class="t" style="left:286px;top:712px;font-size:11.2px;color:#0a0a30;transform:scaleY(1.12);transform-origin:0 9.3px">Tên DLKT: MAYSOFT2019</div>
<svg style="left:432px;top:708px" width="15" height="16"><circle cx="8" cy="4.5" r="3.5" fill="#f0c8a0" stroke="#8a6a40" stroke-width="0.6"/><path d="M1.5 15.5 C2 9.5 14 9.5 14.5 15.5 Z" fill="#3a8ae0" stroke="#2060a8" stroke-width="0.6"/></svg>
<div class="t" style="left:448px;top:712px;font-size:10.9px;color:#0a0a30;transform:scaleY(1.12);transform-origin:0 9.3px">Người dùng: ADMIN</div>
<div class="t" style="left:923px;top:712px;font-size:11.1px;font-weight:bold;color:#000;transform:scaleY(1.12);transform-origin:0 9.3px">Tổng đài tư vấn: MISA SUPPORT</div>
<div class="t" style="left:1106px;top:712px;font-size:11.2px;color:#0a0a30;transform:scaleY(1.12);transform-origin:0 9.3px">OVR</div>
<div class="t" style="left:1140px;top:712px;font-size:11.2px;color:#0a0a30;transform:scaleY(1.12);transform-origin:0 9.3px">NUM</div>
<div class="t" style="left:1251px;top:712px;font-size:11.2px;color:#0a0a30;transform:scaleY(1.12);transform-origin:0 9.3px">10:49 CH</div>
<div class="t" style="left:1307px;top:712px;font-size:11.2px;color:#0a0a30;transform:scaleY(1.12);transform-origin:0 9.3px">13/02/2020</div>
<div class="a" style="left:0;top:728px;width:1366px;height:40px;background:linear-gradient(to right,#213a44 0%,#20343f 40%,#1f2e3e 70%,#1c2742 100%)"></div>
<svg style="left:16px;top:740px" width="17" height="17"><path d="M0 2.3 L7 1.3 V7.6 H0 Z M8 1.1 L16.5 0 V7.6 H8 Z M0 8.6 H7 V15 L0 14 Z M8 8.6 H16.5 V16.5 L8 15.4 Z" fill="#fff"/></svg>
<div class="a" style="left:48px;top:728px;width:344px;height:40px;background:#f0f0f0;"></div>
<svg style="left:60px;top:740px" width="17" height="17"><circle cx="10.5" cy="6.5" r="5.5" stroke="#111" stroke-width="1.3" fill="none"/><path d="M6.6 10.4 L0.8 16.2" stroke="#111" stroke-width="1.5"/></svg>
<div class="t" style="left:88px;top:742px;font-size:14.5px;color:#333;">Type here to search</div>
<svg style="left:407px;top:736px" width="24" height="24" viewBox="0 0 24 24"><path d="M12 12 L3.3 7 A10 10 0 0 1 20.7 7 Z" fill="#db4437"/><path d="M12 12 L20.7 7 A10 10 0 0 1 12 22 Z" fill="#f4c20d"/><path d="M12 12 L12 22 A10 10 0 0 1 3.3 7 Z" fill="#0f9d58"/><circle cx="12" cy="12" r="4.6" fill="#fff"/><circle cx="12" cy="12" r="3.6" fill="#4285f4"/></svg>
<svg style="left:459px;top:739px" width="19" height="19"><path d="M0 0 H18 V11 L11 18 H0 Z" fill="#f8e10a"/><path d="M18 11 L11 18 V11 Z" fill="#222"/></svg>
<svg style="left:506px;top:739px" width="22" height="19"><path d="M0 2 H7 L9 4 H21 V17 H0 Z" fill="#f4c34a"/><path d="M0 5 H21 V17 H0 Z" fill="#fcd667"/><rect x="6" y="11" width="9" height="4" fill="#2a7ad8"/><rect x="8" y="14" width="5" height="4" fill="#2a7ad8"/></svg>
<svg style="left:555px;top:737px" width="23" height="22"><rect x="9" y="3" width="13" height="16" fill="#fff" stroke="#1d6f42"/><path d="M11 6 H20 M11 9 H20 M11 12 H20 M11 15 H20 M15 4 V18" stroke="#1d6f42" stroke-width="0.9"/><path d="M0 2.5 L12 0 V22 L0 19.5 Z" fill="#1d6f42"/><text x="6" y="15" font-family="Liberation Sans" font-weight="bold" font-size="10" text-anchor="middle" fill="#fff">X</text></svg>
<svg style="left:602px;top:736px" width="26" height="26"><circle cx="12" cy="11" r="9.5" fill="#1ea0e6"/><circle cx="6" cy="5" r="4.5" fill="#1ea0e6"/><text x="12" y="16" font-family="Liberation Sans" font-weight="bold" font-size="14" text-anchor="middle" fill="#fff">S</text><circle cx="19" cy="19" r="5.5" fill="#e8392c"/><text x="19" y="22.5" font-family="Liberation Sans" font-weight="bold" font-size="8" text-anchor="middle" fill="#fff">1</text></svg>
<svg style="left:652px;top:737px" width="23" height="22"><rect x="8" y="5" width="14" height="11" fill="#fff"/><path d="M8 5 L15 11 L22 5" stroke="#0a64c8" stroke-width="1.2" fill="none"/><path d="M0 2.5 L12 0 V22 L0 19.5 Z" fill="#0a64c8"/><ellipse cx="6" cy="11" rx="3" ry="3.8" stroke="#fff" stroke-width="1.6" fill="none"/></svg>
<div class="a" style="left:689px;top:728px;width:48px;height:40px;background:#4c5b66;"></div>
<svg style="left:701px;top:736px" width="24" height="24" viewBox="0 0 24 24"><clipPath id="lc2"><circle cx="12" cy="12" r="11.5"/></clipPath><g clip-path="url(#lc2)"><g transform="rotate(-20 12 12)"><path d="M12 12 V0 H24 V12 Z" fill="#fdb913"/><path d="M12 12 H24 V24 H12 Z" fill="#0aa0ee"/><path d="M12 12 V24 H0 V12 Z" fill="#25b06a"/><path d="M12 12 H0 V0 H12 Z" fill="#ec1c24"/></g><circle cx="7.2" cy="9.5" r="5.2" fill="#ec1c24"/><circle cx="14.5" cy="7.2" r="5.2" fill="#fdb913"/><circle cx="16.8" cy="14.5" r="5.2" fill="#0aa0ee"/><circle cx="9.5" cy="16.8" r="5.2" fill="#25b06a"/></g><circle cx="12" cy="12" r="2.2" fill="#fff"/></svg>
<div class="a" style="left:399px;top:766px;width:40px;height:2px;background:#90c4ee;"></div>
<div class="a" style="left:546px;top:766px;width:40px;height:2px;background:#90c4ee;"></div>
<div class="a" style="left:595px;top:766px;width:40px;height:2px;background:#90c4ee;"></div>
<div class="a" style="left:644px;top:766px;width:40px;height:2px;background:#90c4ee;"></div>
<div class="a" style="left:689px;top:766px;width:48px;height:2px;background:#90c4ee;"></div>
<svg style="left:1116px;top:744px" width="14" height="8"><path d="M1 7 L7 1 L13 7" stroke="#fff" stroke-width="1.3" fill="none"/></svg>
<svg style="left:1139px;top:742px" width="18" height="12"><path d="M4 0 V3 M7 0 V3 M3 3 H8 V6 H3 Z M5.5 6 V10" stroke="#fff" stroke-width="1.1" fill="none"/><rect x="7" y="3" width="10" height="7" fill="none" stroke="#fff" stroke-width="1.1"/><rect x="9" y="5" width="6" height="3" fill="#fff"/></svg>
<svg style="left:1165px;top:742px" width="14" height="14"><path d="M1 13 A12 12 0 0 1 13 1 M4 13 A9 9 0 0 1 13 4 M7 13 A6 6 0 0 1 13 7" stroke="#fff" stroke-width="1.1" fill="none"/><circle cx="11.5" cy="11.5" r="1.5" fill="#fff"/></svg>
<svg style="left:1187px;top:742px" width="16" height="14"><path d="M1 4.5 H4 L8 1 V13 L4 9.5 H1 Z" stroke="#fff" stroke-width="1.1" fill="none"/><path d="M10 5 L14 9 M14 5 L10 9" stroke="#fff" stroke-width="1.1"/></svg>
<div class="t" style="left:1213px;top:743px;font-size:11px;color:#fff;transform:scaleY(1.15);transform-origin:0 9.3px">ENG</div>
<div class="t" style="left:1255px;top:733px;font-size:11.6px;color:#fff;letter-spacing:-0.2px">10:49 PM</div>
<div class="t" style="left:1249px;top:751px;font-size:11.6px;color:#fff;letter-spacing:-0.2px;transform:scaleY(1.08);transform-origin:0 10px">13/02/2020</div>
<svg style="left:1323px;top:738px" width="26" height="24"><path d="M2 1 H17 V13 H8 L5 16 V13 H2 Z" fill="#fff"/><path d="M5 4.5 H14 M5 7.5 H14 M5 10 H12" stroke="#1c2742" stroke-width="1"/><circle cx="18" cy="16" r="6.5" fill="#333" stroke="#999" stroke-width="0.8"/><text x="18" y="20" font-family="Liberation Sans" font-weight="bold" font-size="10" text-anchor="middle" fill="#fff">7</text></svg>
<div class="a" style="left:1361px;top:728px;width:1px;height:40px;background:#4a5a70;"></div>
</body></html>
